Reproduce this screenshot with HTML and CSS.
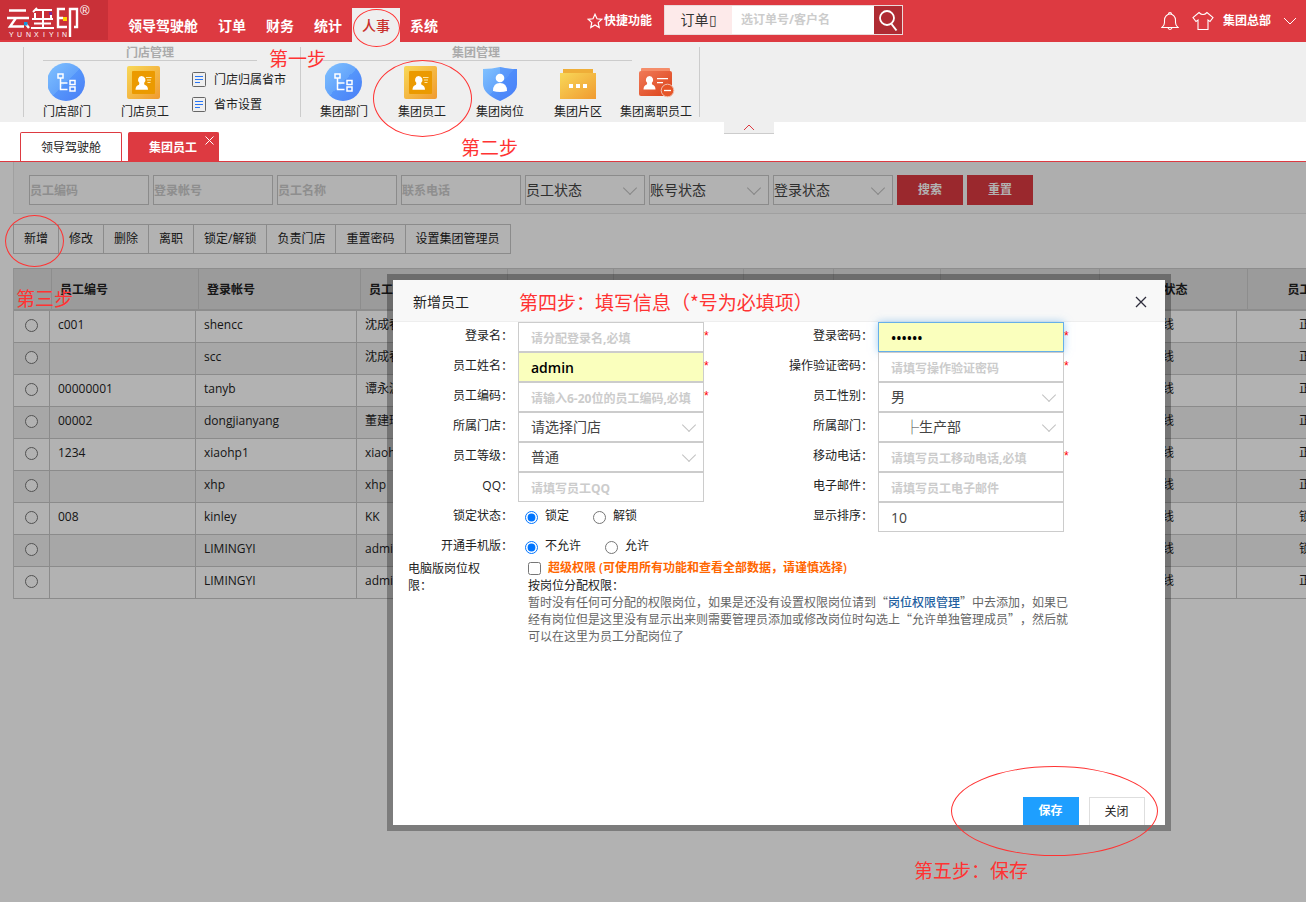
FILE: index.html
```html
<!DOCTYPE html>
<html lang="zh-CN">
<head>
<meta charset="utf-8">
<title>云玺印 - 集团员工</title>
<link rel="stylesheet" href="styles.css">
</head>
<body>
<svg class="defs" aria-hidden="true">
  <defs>
    <linearGradient id="blue" x1="0" y1="0" x2="1" y2="1"><stop offset="0" stop-color="#82c3ff"/><stop offset="0.5" stop-color="#64a4fb"/><stop offset="0.5" stop-color="#5596fb"/><stop offset="1" stop-color="#4a7df6"/></linearGradient>
    <linearGradient id="gold" x1="0" y1="0" x2="1" y2="1"><stop offset="0" stop-color="#f8d858"/><stop offset="1" stop-color="#f09a30"/></linearGradient>
    <linearGradient id="red" x1="0" y1="0" x2="1" y2="1"><stop offset="0" stop-color="#f07a58"/><stop offset="1" stop-color="#dc4118"/></linearGradient>
    <symbol id="i-dept" viewBox="0 0 38 38">
      <circle cx="18" cy="19" r="19" fill="url(#blue)"/>
      <g fill="none" stroke="#fff" stroke-width="1.500"><rect x="10" y="11" width="5" height="4"/><rect x="22" y="17.500" width="5" height="4"/><rect x="22" y="24" width="5" height="4"/><path d="M12.500 15v11.500h7M12.500 20h7"/></g>
    </symbol>
    <symbol id="i-staff" viewBox="0 0 38 38">
      <rect x="1" y="3" width="33" height="33" rx="2" fill="url(#gold)"/><rect x="6" y="8" width="23" height="23" rx="1" fill="#eb9a00"/>
      <path d="M15.500 13a4 4 0 0 1 2.600 7l.4 1.800q3.500 1 3.500 5H9.500q0-4 3.500-5l.4-1.800a4 4 0 0 1 2.100-7z" fill="#fff"/><path d="M20 14.500h5.500M21 17h4M21.500 19.500h3" stroke="#ffe7a8"/>
    </symbol>
    <symbol id="i-post" viewBox="0 0 38 38">
      <path d="M2 6q9 0 17-2 8 2 17 2v15q0 10-17 17Q2 31 2 21z" fill="url(#blue)"/><path d="M19 4q8 2 17 2v15q0 10-17 17z" fill="#4a83fa" opacity=".45"/>
      <circle cx="19" cy="15" r="4.300" fill="#fff"/><path d="M12 28q0-8 7-8t7 8q-3 1-7 1t-7-1z" fill="#fff"/>
    </symbol>
    <symbol id="i-area" viewBox="0 0 38 38">
      <rect x="4" y="6" width="30" height="6" fill="#efae38"/><rect x="1" y="10" width="36" height="26" fill="url(#gold)"/><path d="M10 21h4v4h-4zM17 21h4v4h-4zM24 21h4v4h-4z" fill="#fff"/>
    </symbol>
    <symbol id="i-leave" viewBox="0 0 38 38">
      <rect x="4" y="5" width="29" height="5" rx="1" fill="#f58d6a"/><rect x="2" y="8" width="33" height="25" rx="2" fill="url(#red)"/>
      <path d="M12.500 13a4 4 0 0 1 2.300 7l.4 1.500q3.300 1 3.300 5h-12q0-4 3.300-5l.4-1.500a4 4 0 0 1 2.300-7zM20 15h11v1.300H20zM20 19h6v1.300h-6z" fill="#fff"/>
      <circle cx="30.500" cy="27.500" r="6.300" fill="#e65528" stroke="#efc0b0"/><path d="M27 27.500h7" stroke="#fff" stroke-width="1.300"/>
    </symbol>
    <symbol id="i-doc" viewBox="0 0 14 15"><rect x=".5" y=".5" width="13" height="14" rx="1" fill="none" stroke="#666"/><path d="M3 4.500h8M3 7.500h8M3 10.500h5" stroke="#2876f5"/></symbol>
  </defs>
</svg>

<header class="topbar">
  <a class="logo" href="#" aria-label="云玺印">
    <svg width="108" height="40" viewBox="0 0 108 40">
      <g fill="none" stroke="#fff" stroke-width="2.400">
        <path d="M9 10.500h17M7 18h22M16 18l-6 8.500h14M25 23l4 5"/>
        <path stroke-width="2" d="M37 8l-4 4M35 10h17M43 10v8M35 13v5M51 13v5M32 19h21M34 23.500h17M31 28h23M43 19v9"/>
        <path d="M65 9h-7v18h9M58 18h5M70 37V9h7v18h-3"/>
      </g>
      <path d="M24 22h3.500v3.500H24z" fill="#1797dd"/><path d="M49 12h3v3h-3z" fill="#7d2595"/><path d="M63 17h4v4h-4z" fill="#ffd400"/>
      <text class="logo-latin" y="37" x="9 17 26 34 43 49 57 62">YUNXIYIN</text>
      <text class="logo-mark" x="80" y="15">®</text>
    </svg>
  </a>
  <nav class="mainnav">
    <a href="#">领导驾驶舱</a><a href="#">订单</a><a href="#">财务</a><a href="#">统计</a><a class="on" href="#">人事</a><a href="#">系统</a>
  </nav>
  <a class="quick" href="#"><svg width="16" height="16" viewBox="0 0 16 16"><path d="M8 1.300l2 4.500 4.800.5-3.600 3.300 1 4.900L8 12l-4.200 2.500 1-4.900L1.200 6.300 6 5.800z" fill="none" stroke="#fff" stroke-width="1.200"/></svg>快捷功能</a>
  <form class="search">
    <button class="kind" type="button">订单▯</button>
    <input type="text" aria-label="搜索" placeholder="选订单号/客户名">
    <button class="go" type="button" aria-label="查询"><svg width="28" height="28" viewBox="0 0 28 28"><circle cx="13" cy="12" r="7" fill="none" stroke="#fff" stroke-width="1.800"/><path d="M17.500 18l5 6.500" stroke="#fff" stroke-width="2"/></svg></button>
  </form>
  <div class="user">
    <svg width="18" height="20" viewBox="0 0 18 20"><g fill="none" stroke="#fff" stroke-width="1.100"><path d="M1 16.500h16q-2.500-2-2.500-5V9a5.500 6 0 0 0-11 0v2.500q0 3-2.500 5zM7.500 3a1.500 1.500 0 0 1 3 0M7 17q2 3 4 0"/></g></svg>
    <svg width="22" height="20" viewBox="0 0 22 20"><path d="M7 1.500q4 4 8 0l6 5-3 4-2-1.500v9.500H6V9l-2 1.500-3-4z" fill="none" stroke="#fff" stroke-width="1.100"/></svg>
    <span>集团总部</span>
    <svg width="14" height="8" viewBox="0 0 14 8"><path d="M1 1l6 6 6-6" fill="none" stroke="#fff"/></svg>
  </div>
</header>

<section class="ribbon">
  <div class="group g1">
    <h2>门店管理</h2>
    <div class="items">
      <a class="item" href="#"><svg><use href="#i-dept"/></svg>门店部门</a>
      <a class="item" href="#"><svg><use href="#i-staff"/></svg>门店员工</a>
      <div class="links">
        <a href="#"><svg><use href="#i-doc"/></svg>门店归属省市</a>
        <a href="#"><svg><use href="#i-doc"/></svg>省市设置</a>
      </div>
    </div>
  </div>
  <div class="group g2">
    <h2>集团管理</h2>
    <div class="items">
      <a class="item" href="#"><svg><use href="#i-dept"/></svg>集团部门</a>
      <a class="item" href="#"><svg><use href="#i-staff"/></svg>集团员工</a>
      <a class="item" href="#"><svg><use href="#i-post"/></svg>集团岗位</a>
      <a class="item" href="#"><svg><use href="#i-area"/></svg>集团片区</a>
      <a class="item" href="#"><svg><use href="#i-leave"/></svg>集团离职员工</a>
    </div>
  </div>
  <button class="fold" type="button" aria-label="收起"><svg width="12" height="7" viewBox="0 0 12 7"><path d="M1 6l5-5 5 5" fill="none" stroke="#dd3a41"/></svg></button>
</section>

<nav class="tabs">
  <a href="#">领导驾驶舱</a>
  <a class="on" href="#">集团员工<svg width="9" height="9" viewBox="0 0 9 9"><path d="M.5.5l8 8M8.500.5l-8 8" stroke="#fff"/></svg></a>
</nav>

<main>
  <form class="filter">
    <input type="text" aria-label="员工编码" placeholder="员工编码">
    <input type="text" aria-label="登录帐号" placeholder="登录帐号">
    <input type="text" aria-label="员工名称" placeholder="员工名称">
    <input type="text" aria-label="联系电话" placeholder="联系电话">
    <span class="pick"><select aria-label="员工状态"><option>员工状态</option></select></span>
    <span class="pick"><select aria-label="账号状态"><option>账号状态</option></select></span>
    <span class="pick"><select aria-label="登录状态"><option>登录状态</option></select></span>
    <button type="button">搜索</button>
    <button type="button">重置</button>
  </form>
  <div class="tools">
    <button type="button">新增</button><button type="button">修改</button><button type="button">删除</button><button type="button">离职</button><button type="button">锁定/解锁</button><button type="button">负责门店</button><button type="button">重置密码</button><button type="button">设置集团管理员</button>
  </div>
  <div class="grid">
    <table class="head">
      <colgroup><col class="h0"><col class="h1"><col class="h2"><col class="h3"><col class="h4"><col class="h5"><col class="h6"><col class="h7"><col class="h8"><col class="h9"><col class="h9"></colgroup>
      <thead><tr><th></th><th>员工编号</th><th>登录帐号</th><th>员工姓名</th><th></th><th></th><th></th><th></th><th></th><th class="mid">登录状态</th><th class="mid">员工状态</th></tr></thead>
    </table>
    <table class="rows">
      <colgroup><col class="b0"><col class="b1"><col class="b2"><col class="b3"><col class="b4"><col class="b5"><col class="b5"></colgroup>
      <tbody>
        <tr><td><input type="radio" name="row" aria-label="选择"></td><td>c001</td><td>shencc</td><td>沈成春</td><td></td><td class="mid">在线</td><td class="mid">正常</td></tr>
        <tr><td><input type="radio" name="row" aria-label="选择"></td><td></td><td>scc</td><td>沈成春</td><td></td><td class="mid">在线</td><td class="mid">正常</td></tr>
        <tr><td><input type="radio" name="row" aria-label="选择"></td><td>00000001</td><td>tanyb</td><td>谭永波</td><td></td><td class="mid">在线</td><td class="mid">正常</td></tr>
        <tr><td><input type="radio" name="row" aria-label="选择"></td><td>00002</td><td>dongjianyang</td><td>董建环</td><td></td><td class="mid">在线</td><td class="mid">正常</td></tr>
        <tr><td><input type="radio" name="row" aria-label="选择"></td><td>1234</td><td>xiaohp1</td><td>xiaohp</td><td></td><td class="mid">在线</td><td class="mid">正常</td></tr>
        <tr><td><input type="radio" name="row" aria-label="选择"></td><td></td><td>xhp</td><td>xhp</td><td></td><td class="mid">在线</td><td class="mid">正常</td></tr>
        <tr><td><input type="radio" name="row" aria-label="选择"></td><td>008</td><td>kinley</td><td>KK</td><td></td><td class="mid">在线</td><td class="mid">锁定</td></tr>
        <tr><td><input type="radio" name="row" aria-label="选择"></td><td></td><td>LIMINGYI</td><td>admin</td><td></td><td class="mid">在线</td><td class="mid">锁定</td></tr>
        <tr><td><input type="radio" name="row" aria-label="选择"></td><td></td><td>LIMINGYI</td><td>admin</td><td></td><td class="mid">在线</td><td class="mid">正常</td></tr>
      </tbody>
    </table>
  </div>
  <div class="mask"></div>

  <section class="dialog" role="dialog" aria-label="新增员工">
    <div class="title"><h3>新增员工</h3><button type="button" aria-label="关闭窗口"><svg width="12" height="12" viewBox="0 0 12 12"><path d="M1 1l10 10M11 1L1 11" stroke="#2e2d3c" stroke-width="1.300"/></svg></button></div>
    <form class="form">
      <div class="col">
        <div class="field"><label for="f1">登录名：</label><input id="f1" type="text" placeholder="请分配登录名,必填"><i>*</i></div>
        <div class="field"><label for="f2">员工姓名：</label><input id="f2" class="filled" type="text" value="admin"><i>*</i></div>
        <div class="field"><label for="f3">员工编码：</label><input id="f3" type="text" placeholder="请输入6-20位的员工编码,必填"><i>*</i></div>
        <div class="field"><label for="f4">所属门店：</label><span class="pick"><select id="f4"><option>请选择门店</option></select></span></div>
        <div class="field"><label for="f5">员工等级：</label><span class="pick"><select id="f5"><option>普通</option></select></span></div>
        <div class="field"><label for="f6">QQ：</label><input id="f6" type="text" placeholder="请填写员工QQ"></div>
        <div class="field"><span class="lab">锁定状态：</span><div class="opts"><label><input type="radio" name="lock" checked>锁定</label><label><input type="radio" name="lock">解锁</label></div></div>
        <div class="field"><span class="lab">开通手机版：</span><div class="opts"><label><input type="radio" name="mob" checked>不允许</label><label><input type="radio" name="mob">允许</label></div></div>
      </div>
      <div class="col">
        <div class="field"><label for="r1">登录密码：</label><input id="r1" class="filled focus" type="password" value="123456"><i>*</i></div>
        <div class="field"><label for="r2">操作验证密码：</label><input id="r2" type="password" placeholder="请填写操作验证密码"><i>*</i></div>
        <div class="field"><label for="r3">员工性别：</label><span class="pick"><select id="r3"><option>男</option></select></span></div>
        <div class="field"><label for="r4">所属部门：</label><span class="pick"><select id="r4" class="tree"><option>├生产部</option></select></span></div>
        <div class="field"><label for="r5">移动电话：</label><input id="r5" type="text" placeholder="请填写员工移动电话,必填"><i>*</i></div>
        <div class="field"><label for="r6">电子邮件：</label><input id="r6" type="text" placeholder="请填写员工电子邮件"></div>
        <div class="field"><label for="r7">显示排序：</label><input id="r7" type="text" value="10"></div>
      </div>
    </form>
    <div class="perm">
      <span class="permlab">电脑版岗位权限：</span>
      <div class="permbody">
        <label class="super"><input type="checkbox">超级权限 (可使用所有功能和查看全部数据，请谨慎选择)</label>
        <strong>按岗位分配权限：</strong>
        <p>暂时没有任何可分配的权限岗位，如果是还没有设置权限岗位请到“<a href="#">岗位权限管理</a>”中去添加，如果已经有岗位但是这里没有显示出来则需要管理员添加或修改岗位时勾选上“允许单独管理成员”，然后就可以在这里为员工分配岗位了</p>
      </div>
    </div>
    <div class="actions"><button class="save" type="button">保存</button><button class="close" type="button">关闭</button></div>
  </section>
</main>

<div class="ring ring1"></div><div class="ring ring2"></div><div class="ring ring3"></div><div class="ring ring5"></div>
<div class="note note1">第一步</div>
<div class="note note2">第二步</div>
<div class="note note3">第三步</div>
<div class="note note4">第四步：填写信息（*号为必填项）</div>
<div class="note note5">第五步：保存</div>
</body>
</html>
```
FILE: styles.css
```css
* { box-sizing: border-box; }
body {
  margin: 0;
  min-height: 100vh;
  display: flex;
  flex-direction: column;
  position: relative;
  overflow: hidden;
  background: #fff;
  color: #222;
  font: 12px/18px "Open Sans", "Noto Sans CJK SC", sans-serif;
}
a { color: inherit; text-decoration: none; }
button, input, select { font: inherit; color: inherit; margin: 0; padding: 0; border: 0; border-radius: 0; outline: 0; }
h2, h3, p { margin: 0; }
svg { display: block; flex: none; }
.defs { position: absolute; width: 0; height: 0; }

/* top bar */
.topbar { display: flex; align-items: center; height: 42px; background: #dd3a41; color: #fff; }
.logo { align-self: flex-start; width: 108px; height: 40px; background: #c93038; }
.logo-latin { font: 7px "Liberation Sans", sans-serif; fill: #fff; }
.logo-mark { font: 13px "Liberation Sans", sans-serif; fill: #fff; }
.mainnav { display: flex; align-self: flex-end; margin-left: 10px; font-size: 14px; font-weight: bold; line-height: 34px; }
.mainnav a { height: 34px; padding: 1px 10px 0; }
.mainnav .on { background: #efefef; color: #c9302c; font-weight: 500; }
.quick { display: flex; align-items: center; gap: 1px; margin-left: 139px; font-weight: bold; }
.search { display: flex; height: 30px; margin: 0 0 2px 12px; border: 1px solid #eadada; background: #fff; }
.search .kind { width: 67px; background: #fdeaea; color: #333; font-size: 14px; }
.search input { width: 142px; padding: 0 9px; color: #333; }
.search .go { background: #af2b33; width: 28px; }
::placeholder { color: #ccc; opacity: 1; font-size: 12px; font-weight: bold; }
.user { display: flex; align-items: center; margin-left: auto; padding-right: 9px; font-weight: bold; }
.user svg + svg { margin-left: 13px; }
.user span { margin: 0 12px 0 9px; }

/* ribbon */
.ribbon { position: relative; display: flex; height: 80px; padding: 5px 0 5px 23px; background: #efefef; }
.group { padding: 0 4px; border-left: 1px solid #ccc; }
.g2 { border-right: 1px solid #ccc; }
.group h2 { height: 14px; margin: 0 0 2px 15px; border-bottom: 1px solid #ccc; color: #aaa; font-size: 12px; line-height: 11px; text-align: center; }
.g1 h2 { margin-right: 39px; }
.g2 h2 { margin-right: 63px; }
.items { display: flex; }
.item { display: flex; flex-direction: column; align-items: center; width: 78px; line-height: 22px; }
.item svg { width: 38px; height: 38px; }
.links { width: 112px; padding: 4px 0 0 8px; }
.links a { display: flex; align-items: center; gap: 8px; height: 25px; white-space: nowrap; }
.links svg { width: 14px; height: 15px; }
.fold { position: absolute; top: 80px; left: 724px; display: flex; justify-content: center; align-items: center; width: 50px; height: 12px; background: #efefef; border-bottom: 1px solid #ccc; }

/* page tabs */
.tabs { display: flex; gap: 6px; height: 40px; padding: 10px 20px 0; border-bottom: 1px solid #dd3a41; line-height: 29px; }
.tabs a { position: relative; padding: 0 20px; border: 1px solid #dd3a41; border-bottom: 0; border-radius: 2px 2px 0 0; }
.tabs .on { padding-right: 21px; background: #dd3a41; color: #fff; font-weight: bold; }
.tabs svg { position: absolute; top: 3px; right: 4px; }

/* list page */
main { position: relative; flex: 1; padding-left: 13px; }
.filter { display: flex; gap: 4px; padding: 13px 15px 8px; border: 1px solid #e6e6e6; border-top: 0; border-right: 0; background: #f9f9f9; }
.filter input, .filter select { width: 120px; height: 30px; border: 1px solid #c8c8c8; background: #fff; }
.filter button { width: 66px; background: #dd3a41; color: #fff; font-weight: bold; }
.pick { position: relative; display: block; }
.pick select { display: block; appearance: none; color: #444; font-size: 14px; background: #fff; }
.pick::after { content: ""; position: absolute; top: 8px; right: 10px; width: 9px; height: 9px; border: solid #c2c2c2; border-width: 0 1px 1px 0; transform: rotate(45deg); pointer-events: none; }
.tools { display: flex; margin-top: 10px; }
.tools button { height: 30px; padding: 0 10px; border: 1px solid #c8c8c8; border-right: 0; background: #fff; }
.tools button:last-child { border-right: 1px solid #c8c8c8; }
.grid { margin-top: 14px; overflow: hidden; }
.grid table { table-layout: fixed; border-collapse: separate; border-spacing: 0; border-left: 1px solid #d0d0d0; }
.head { width: 1382px; }
.rows { width: 1372px; }
.head th { height: 43px; padding: 2px 8px 0; background: #dedede; border: solid #cacaca; border-width: 1px 1px 2px 0; text-align: left; }
.head .mid { padding-right: 28px; text-align: center; }
.rows td { height: 32px; padding: 0 8px 4px; border: solid #c8c8c8; border-width: 0 1px 1px 0; }
.rows .mid { text-align: center; }
.rows tr:nth-child(even) { background: #efefef; }
.rows input { display: block; width: 13px; height: 13px; margin: 2px auto 0; }
.h0 { width: 38px; } .h1 { width: 147px; } .h2 { width: 162px; } .h3 { width: 147px; } .h4 { width: 106px; }
.h5 { width: 130px; } .h6 { width: 90px; } .h7 { width: 107px; } .h8 { width: 159px; } .h9 { width: 148px; }
.b0 { width: 36px; } .b1 { width: 146px; } .b2 { width: 161px; } .b3 { width: 146px; } .b4 { width: 585px; } .b5 { width: 149px; }
.mask { position: absolute; inset: 0; background: rgba(0, 0, 0, .3); }

/* dialog */
.dialog { position: absolute; top: 112px; left: 387px; display: flex; flex-direction: column; width: 60%; min-height: 557px; border: 6px solid rgba(0, 0, 0, .3); background: #fff; background-clip: padding-box; }
.title { display: flex; justify-content: space-between; align-items: center; height: 42px; padding: 2px 18px 0 20px; border-bottom: 1px solid #eee; background: #f8f8f8; }
.title h3 { font-size: 14px; font-weight: normal; }
.title button { background: none; }
.form { display: flex; }
.col { width: 360px; }
.field { display: flex; height: 30px; }
.field > label, .lab { flex: none; width: 120px; margin-right: 5px; font-family: "Open Sans", "Noto Sans CJK SC", sans-serif; line-height: 28px; text-align: right; }
.field > input, .field select { width: 186px; height: 30px; padding: 0 12px; border: 1px solid #ccc; background: #fff; color: #444; font-size: 14px; }
.field i { color: #f00; font: 12px/28px "Liberation Sans", sans-serif; }
.field .filled { background: #faffbd; color: #000; font-weight: 600; }
.field .focus { border-color: #66afe9; box-shadow: 0 0 8px rgba(102, 175, 233, .6); }
.field .tree { padding-left: 26px; }
.opts { display: flex; gap: 24px; padding-left: 7px; line-height: 28px; }
.opts label { display: flex; gap: 7px; }
.opts input { width: 13px; height: 13px; margin-top: 9px; }
.perm { display: flex; gap: 48px; margin-top: -3px; padding-left: 15px; line-height: 17px; font-family: "Noto Sans CJK SC", sans-serif; text-spacing-trim: space-all; }
.permlab { width: 72px; }
.permbody { width: 541px; }
.permbody strong { display: block; font-weight: normal; }
.permbody p { color: #666; }
.permbody a { color: #1f5f9f; font-weight: 500; }
.super { display: flex; gap: 7px; color: #f60; font-family: "Open Sans", "Noto Sans CJK SC", sans-serif; font-weight: 600; }
.super input { width: 13px; height: 13px; margin-top: 3px; }
.actions { display: flex; justify-content: flex-end; gap: 10px; margin-top: auto; padding-right: 20px; }
.actions button { width: 56px; height: 28px; }
.save { background: #1e9fff; color: #fff; font-weight: bold; }
.actions .close { border: 1px solid #dedede; border-bottom: 0; background: #fff; }

/* walkthrough marks */
.ring { position: absolute; border: 1px solid #f33; border-radius: 50%; pointer-events: none; }
.ring1 { left: 353px; top: 9px; width: 47px; height: 38px; }
.ring2 { left: 373px; top: 60px; width: 99px; height: 77px; }
.ring3 { left: 5px; top: 215px; width: 59px; height: 52px; }
.ring5 { left: 951px; top: 766px; width: 207px; height: 90px; }
.note { position: absolute; color: #f33; font: 19px/28px "Noto Sans CJK SC", sans-serif; white-space: nowrap; }
.note1 { left: 269px; top: 44px; }
.note2 { left: 461px; top: 133px; }
.note3 { left: 16px; top: 284px; }
.note4 { left: 519px; top: 288px; }
.note5 { left: 914px; top: 856px; }
```
